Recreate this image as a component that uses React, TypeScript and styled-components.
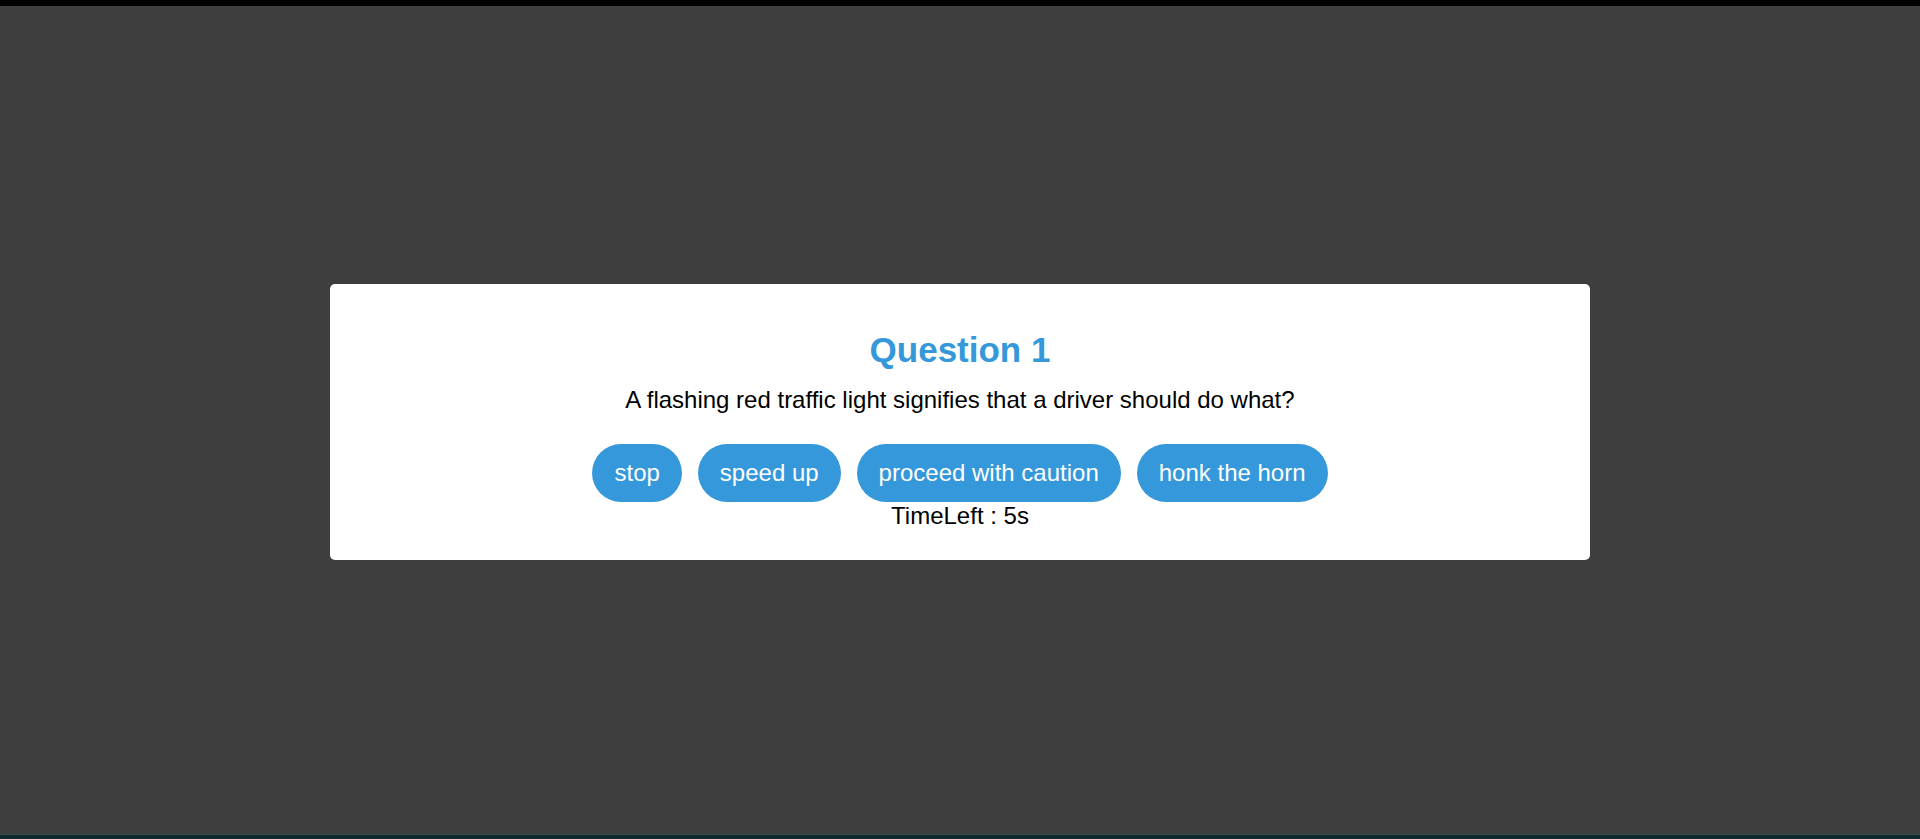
import styled, { createGlobalStyle } from 'styled-components';

type Quiz = {
  title: string;
  question: string;
  options: string[];
  timeLeft: number;
};

const quiz: Quiz = {
  title: 'Question 1',
  question: 'A flashing red traffic light signifies that a driver should do what?',
  options: ['stop', 'speed up', 'proceed with caution', 'honk the horn'],
  timeLeft: 5,
};

const GlobalStyle = createGlobalStyle`
  html, body {
    margin: 0;
    padding: 0;
    height: 100%;
    background: #3e3e3e;
    font-family: 'Liberation Sans', Arial, sans-serif;
  }
  #root {
    height: 100%;
  }
`;

const Page = styled.div`
  height: 839px;
  display: flex;
  flex-direction: column;
  background: #3e3e3e;
`;

const TopBar = styled.div`
  height: 6px;
  background: #000;
  flex-shrink: 0;
`;

const BottomBar = styled.div`
  height: 4px;
  background: #0f292d;
  border-top: 1px solid #3a4c4f;
  flex-shrink: 0;
`;

const Main = styled.main`
  flex: 1;
  display: flex;
  align-items: center;
  justify-content: center;
  padding-top: 4px;
`;

const Card = styled.section`
  width: 1260px;
  box-sizing: border-box;
  background: #fff;
  border-radius: 5px;
  padding: 30px 40px;
  display: flex;
  flex-direction: column;
  align-items: center;
`;

const Title = styled.h2`
  margin: 16px 0 16px;
  font-size: 35px;
  font-weight: 700;
  color: #3498db;
`;

const QuestionText = styled.p`
  margin: 0 0 30px;
  font-size: 24px;
  color: #000;
`;

const Options = styled.div`
  display: flex;
  justify-content: center;
  gap: 16px;
`;

const OptionButton = styled.button`
  font-family: inherit;
  font-size: 24px;
  line-height: normal;
  color: #fff;
  background: #3498db;
  border: none;
  border-radius: 30px;
  padding: 15px 22px;
  cursor: pointer;

  &:hover {
    background: #2c86c4;
  }
`;

const Timer = styled.div`
  font-size: 24px;
  color: #000;
`;

const App = () => {
  return (
    <>
      <GlobalStyle />
      <Page>
        <TopBar />
        <Main>
          <Card>
            <Title>{quiz.title}</Title>
            <QuestionText>{quiz.question}</QuestionText>
            <Options>
              {quiz.options.map((opt) => (
                <OptionButton key={opt}>{opt}</OptionButton>
              ))}
            </Options>
            <Timer>TimeLeft : {quiz.timeLeft}s</Timer>
          </Card>
        </Main>
        <BottomBar />
      </Page>
    </>
  );
};

export default App;
